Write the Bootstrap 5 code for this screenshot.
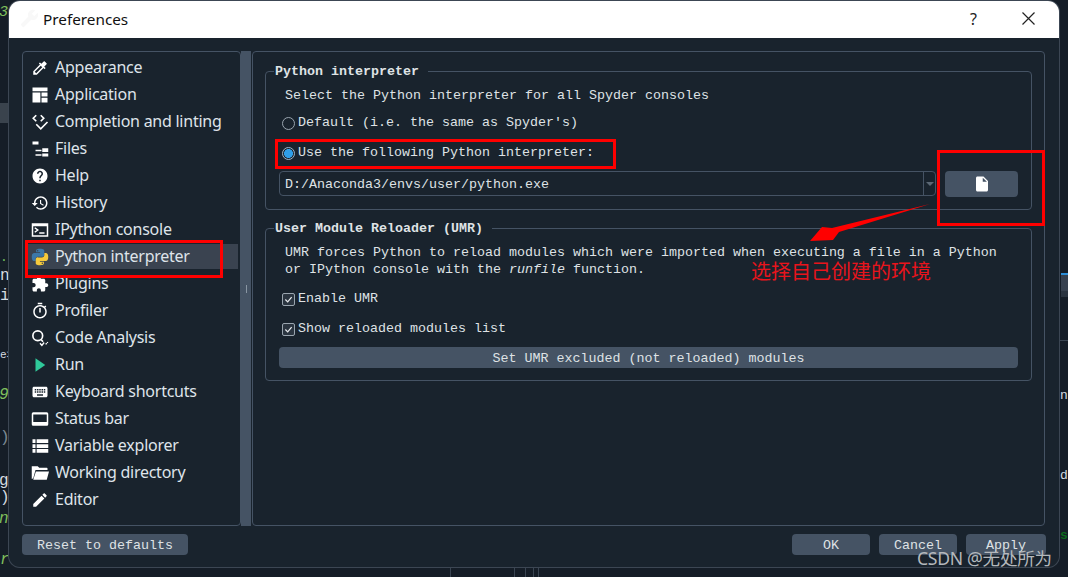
<!DOCTYPE html>
<html lang="en">
<head>
<meta charset="utf-8">
<title>Preferences</title>
<link href="https://cdn.jsdelivr.net/npm/bootstrap@5.3.0/dist/css/bootstrap.min.css" rel="stylesheet">
<style>
html,body{margin:0;width:1068px;height:577px;overflow:hidden;background:#141c25;}
.desk{position:relative;width:1068px;height:577px;overflow:hidden;background:#151d27;}
.frag{position:absolute;font:16px/20px "Liberation Mono",monospace;color:#d5dbe0;}
.gr{color:#7fbf5d;font-style:italic;}
.f1{left:-1px;top:3px;font-size:15px}.f2{left:0;top:266px}.f3{left:0;top:286px}.f4{left:0;top:345px;font-size:11px}
.f5{left:-1px;top:385px}.f6{left:0;top:428px;color:#7d8a94}.f7{left:-1px;top:471px}.f8{left:0;top:488px}
.f9{left:-1px;top:509px}.f10{left:0;top:550px}.f11{left:1060px;top:386px;font-size:13px}.f12{left:1060px;top:466px;font-size:13px}
.f13{left:1060px;top:526px;color:#0a6b1c;font-size:13px;font-weight:700}
.f14{left:0;top:248px;color:#6fbf5d;font-size:13px}
.rowbar{position:absolute;left:0;top:103px;width:8px;height:20px;background:#3a434d;}
.tabbar{position:absolute;left:1061px;top:273px;width:7px;height:18px;background:#37414f;border-top:2px solid #2d8fd8;}
.tabbar2{position:absolute;left:1061px;top:291px;width:7px;height:6px;background:#2a3440;}
.hline{position:absolute;left:1060px;top:340px;width:8px;height:1px;background:#3a4552;}
.vl{position:absolute;top:567px;width:1px;height:10px;background:#3a4552;}
.v1{left:450px}.v2{left:514px}.v3{left:525px}.v4{left:533px}.v5{left:538px}

.dlg{position:absolute;left:9px;top:1px;width:1050px;height:566px;background:#19232d;border-radius:11px;box-shadow:0 0 0 1px #3c4653;display:flex;flex-direction:column;overflow:hidden;}
.ttl{height:37px;background:#fff;color:#111;font:15.3px "Noto Sans",sans-serif;padding:0 24px 2px 11px;}
.ttl-help{font-size:16px;margin-right:45px;color:#222;}
.dlg-body{flex:1;padding:13px 13px 12px 13px;display:flex;flex-direction:column;}
.mainrow{height:475px;display:flex;margin-right:1px;}
.side{width:219px;flex:none;border:1px solid #455364;border-radius:4px;padding:2px 2px 0 5px;background:#19232d;}
.side .list-group-item{height:27px;padding:0 0 0 3px;background:transparent;border:0;color:#dfe4ea;font:16px/27px "Noto Sans",sans-serif;letter-spacing:-.25px;display:flex;align-items:center;gap:6px;border-radius:0;}
.side .list-group-item.sel{background:#3a4350;height:25px;margin:1px 0;}
.side svg{width:18px;height:18px;fill:#fff;flex:none;}
.split{width:10px;flex:none;background:#455364;display:flex;align-items:center;justify-content:center;margin-right:1px;}
.grip{width:1px;height:8px;background:#8996a3;}
.panel{flex:1;min-width:0;border:1px solid #455364;border-radius:4px;padding:19px 12px 0 12px;}
.grp{border:1px solid #455364;border-radius:4px;padding:0 13px 12px 13px;font:13.34px/18px "Liberation Mono",monospace;color:#dfe2e5;}
.grp+.grp{margin-top:18px;}
.gtitle{margin-top:-9px;height:18px;margin-left:-5px;font-weight:700;background:#19232d;display:table;padding:0 9px 0 1px;}
.g-desc{margin-top:6px;padding-left:6px;}
.g-desc2{margin-top:6px;padding-left:6px;line-height:17px;}
.opt{display:flex;align-items:center;height:18px;gap:3px;padding-left:3px;}
.o1{margin-top:9px}.o2{margin-top:12px}.o3{margin-top:12px}.o4{margin-top:12px}
.opt .form-check-input{width:13px;height:13px;margin:0;background-color:#19232d;border:1px solid #9aa5af;flex:none;}
.opt .form-check-input[type=radio]:checked{background-color:#19232d;border-color:#9fb6c8;background-image:radial-gradient(circle,#2f9fe8 0 4.2px,transparent 4.7px);}
.opt .form-check-input[type=checkbox]{border-radius:2px;background-color:#2b3540;}
.opt .form-check-input[type=checkbox]:checked{background-color:#2b3540;border-color:#9aa5af;background-image:url("data:image/svg+xml,%3csvg xmlns='http://www.w3.org/2000/svg' viewBox='0 0 14 14'%3e%3cpath fill='none' stroke='%23e6e9ec' stroke-width='1.6' d='M3 7l3 3 5-6'/%3e%3c/svg%3e");background-size:100%;}
.pathrow{margin-top:9px;display:flex;align-items:flex-start;gap:9px;}
.combo{width:657px;height:25px;border:1px solid #455364;border-radius:4px;display:flex;color:#dfe2e5;}
.combo-val{flex:1;padding-left:5px;line-height:25px;}
.combo-arr{width:12px;border-left:1px solid #455364;display:flex;align-items:center;justify-content:center;}
.tri{width:0;height:0;border:4px solid transparent;border-top:4px solid #5b6875;border-bottom:0;}
.spy{background:#455364;border:0;border-radius:4px;color:#dfe2e5;font:13.34px/21px "Liberation Mono",monospace;height:21px;padding:1px 0 0;}
.spy:hover{background:#455364;color:#dfe2e5;}
.pick{width:73px;height:26px;display:flex;align-items:center;justify-content:center;padding:0;}
.pick svg{width:18px;height:18px;fill:#fff;}
.wide{display:block;width:739px;margin-top:9px;}
.footrow{margin-top:8px;display:flex;align-items:center;}
.b-reset{width:166px;}
.b-ok{width:78px;margin-left:auto;}
.b-can{width:78px;margin-left:9px;}
.b-app{width:80px;margin-left:9px;}

.redbox{position:absolute;border:3px solid #ff0000;}
.r1{left:25px;top:240px;width:198px;height:38px;}
.r2{left:275px;top:139px;width:341px;height:30px;}
.r3{left:937px;top:150px;width:108px;height:76px;}
.arrow{position:absolute;left:800px;top:195px;width:140px;height:55px;}
.note{position:absolute;left:751px;top:258px;color:#e8141c;font:20px/26px "Noto Sans CJK SC",sans-serif;}
.wm{position:absolute;left:917px;top:546px;color:#b4b8bc;font:17.6px/24px "Noto Sans","Noto Sans CJK SC",sans-serif;letter-spacing:-.3px;white-space:nowrap;}
</style>
</head>
<body>
<div class="desk">
  <div class="rowbar"></div><div class="tabbar"></div><div class="tabbar2"></div><div class="hline"></div>
  <div class="vl v1"></div><div class="vl v2"></div><div class="vl v3"></div><div class="vl v4"></div><div class="vl v5"></div>
  <span class="frag gr f1">3</span><span class="frag f14">.</span><span class="frag f2">n</span><span class="frag f3">i</span><span class="frag f4">e&gt;</span><span class="frag gr f5">9</span><span class="frag f6">)</span><span class="frag f7">g</span><span class="frag f8">)</span><span class="frag gr f9">n</span><span class="frag gr f10">r</span><span class="frag f11">n</span><span class="frag f12">d</span><span class="frag f13">s</span>

  <div class="dlg">
    <div class="ttl d-flex align-items-center">
      <svg width="19" height="19" viewBox="0 0 24 24" class="me-1"><path fill="#f8f8f8" d="M22.700 19l-9.100-9.100c.9-2.300.4-5-1.500-6.900-2-2-5-2.400-7.400-1.300L9 6 6 9 1.600 4.700C.4 7.100.9 10.100 2.900 12.100c1.900 1.900 4.600 2.400 6.900 1.500l9.100 9.100c.4.400 1 .4 1.400 0l2.300-2.300c.5-.4.500-1.100.1-1.400z" transform="rotate(90 12 12)"/></svg>
      <span>Preferences</span>
      <span class="ms-auto ttl-help">?</span>
      <svg width="13" height="13" viewBox="0 0 13 13"><path d="M.5.500l12 12M12.500.500l-12 12" stroke="#222" stroke-width="1.200" fill="none"/></svg>
    </div>
    <div class="dlg-body">
      <div class="mainrow">
        <div class="side">
          <div class="list-group list-group-flush">
            <div class="list-group-item"><svg viewBox="0 0 24 24"><path d="M20.710 5.630l-2.340-2.340c-.39-.39-1.020-.39-1.410 0l-3.120 3.120-1.930-1.910-1.410 1.410 1.420 1.420L3 16.250V21h4.750l8.920-8.920 1.420 1.420 1.410-1.410-1.920-1.920 3.120-3.120c.4-.4.4-1.030.01-1.420zM6.920 19L5 17.080l8.060-8.060 1.920 1.920L6.920 19z"/></svg>Appearance</div>
            <div class="list-group-item"><svg viewBox="0 0 24 24"><path d="M2 2h20v5H2zM2 8.500h10.500V22H2zM14 8.500h8V14h-8zM14 15.500h8V22h-8z"/></svg>Application</div>
            <div class="list-group-item"><svg viewBox="0 0 24 24"><path d="M7 3L3 7l4 4M13 3l4 4-4 4M7 15l6 6 9-9" fill="none" stroke="#fff" stroke-width="2.200"/></svg>Completion and linting</div>
            <div class="list-group-item"><svg viewBox="0 0 24 24"><path d="M2 2h8v4H2zM4 7h2v14h8v-2H6v-4h8v-2H6V7H4zM15 11h8v5h-8zM15 18h8v4h-8z"/></svg>Files</div>
            <div class="list-group-item"><svg viewBox="0 0 24 24"><path d="M12 2C6.480 2 2 6.480 2 12s4.480 10 10 10 10-4.480 10-10S17.520 2 12 2zm1 17h-2v-2h2v2zm2.070-7.750l-.9.920C13.450 12.900 13 13.500 13 15h-2v-.5c0-1.100.45-2.100 1.170-2.830l1.240-1.260c.37-.36.59-.86.59-1.410 0-1.100-.9-2-2-2s-2 .9-2 2H8c0-2.210 1.790-4 4-4s4 1.790 4 4c0 .88-.36 1.680-.93 2.250z"/></svg>Help</div>
            <div class="list-group-item"><svg viewBox="0 0 24 24"><path d="M13 3c-4.970 0-9 4.030-9 9H1l3.890 3.890.07.14L9 12H6c0-3.870 3.130-7 7-7s7 3.130 7 7-3.130 7-7 7c-1.930 0-3.680-.79-4.940-2.060l-1.420 1.420C8.270 19.990 10.510 21 13 21c4.970 0 9-4.030 9-9s-4.030-9-9-9zm-1 5v5l4.280 2.540.72-1.210-3.500-2.080V8H12z"/></svg>History</div>
            <div class="list-group-item"><svg viewBox="0 0 24 24"><path fill-rule="evenodd" d="M1 3h22v18H1zM3 7v12h18V7z"/><path d="M5 9l4 3-4 3" fill="none" stroke="#fff" stroke-width="2"/><path d="M11 15h7v2h-7z"/></svg>IPython console</div>
            <div class="list-group-item sel"><svg viewBox="0 0 24 24"><path fill="#3b77a8" d="M11.900 1C6.500 1 6.800 3.300 6.800 3.300v2.500h5.300v.8H4.700S1 6.200 1 11.900s3.200 5.500 3.200 5.500h2v-2.700s-.1-3.200 3.100-3.200h5.400s3 .05 3-2.900V3.900S18.200 1 11.900 1zM8.900 2.700a1 1 0 1 1 0 2 1 1 0 0 1 0-2z"/><path fill="#f4c93c" d="M12.100 23c5.400 0 5.100-2.300 5.100-2.300v-2.500h-5.300v-.8h7.400s3.700.4 3.700-5.300-3.200-5.500-3.200-5.500h-2v2.700s.1 3.200-3.100 3.200H9.300s-3-.05-3 2.900v4.700S5.800 23 12.100 23zm3-1.700a1 1 0 1 1 0-2 1 1 0 0 1 0 2z"/></svg>Python interpreter</div>
            <div class="list-group-item"><svg viewBox="0 0 24 24"><path d="M20.500 11H19V7c0-1.100-.9-2-2-2h-4V3.500C13 2.120 11.880 1 10.500 1S8 2.120 8 3.500V5H4c-1.100 0-1.990.9-1.990 2v3.800H3.500c1.490 0 2.700 1.210 2.700 2.700s-1.210 2.700-2.700 2.700H2V20c0 1.100.9 2 2 2h3.800v-1.500c0-1.490 1.210-2.700 2.700-2.700 1.490 0 2.700 1.210 2.700 2.700V22H17c1.100 0 2-.9 2-2v-4h1.500c1.380 0 2.500-1.120 2.500-2.500S21.880 11 20.500 11z"/></svg>Plugins</div>
            <div class="list-group-item"><svg viewBox="0 0 24 24"><path d="M15 1H9v2h6V1zm-4 13h2V8h-2v6zm8.030-6.610l1.420-1.420c-.43-.51-.9-.99-1.410-1.410l-1.420 1.420C16.070 4.740 14.120 4 12 4c-4.970 0-9 4.030-9 9s4.020 9 9 9 9-4.030 9-9c0-2.120-.74-4.070-1.970-5.610zM12 20c-3.870 0-7-3.130-7-7s3.130-7 7-7 7 3.130 7 7-3.130 7-7 7z"/></svg>Profiler</div>
            <div class="list-group-item"><svg viewBox="0 0 24 24"><circle cx="9" cy="9" r="6.500" fill="none" stroke="#fff" stroke-width="2.200"/><path d="M13.500 14l2.500 3" stroke="#fff" stroke-width="2.200" fill="none"/><path d="M12 19l2.500 3 3-4M19.500 20.500l1.500-1.500M21.500 18.500l1-1" fill="none" stroke="#fff" stroke-width="1.800"/></svg>Code Analysis</div>
            <div class="list-group-item"><svg viewBox="0 0 24 24"><path fill="#2fc99a" d="M6 3l13 9-13 9z"/></svg>Run</div>
            <div class="list-group-item"><svg viewBox="0 0 24 24"><path d="M20 5H4c-1.100 0-1.990.9-1.990 2L2 17c0 1.100.9 2 2 2h16c1.100 0 2-.9 2-2V7c0-1.100-.9-2-2-2zm-9 3h2v2h-2V8zm0 3h2v2h-2v-2zM8 8h2v2H8V8zm0 3h2v2H8v-2zm-1 2H5v-2h2v2zm0-3H5V8h2v2zm9 7H8v-2h8v2zm0-4h-2v-2h2v2zm0-3h-2V8h2v2zm3 3h-2v-2h2v2zm0-3h-2V8h2v2z"/></svg>Keyboard shortcuts</div>
            <div class="list-group-item"><svg viewBox="0 0 24 24"><path fill-rule="evenodd" d="M3 3h18a2 2 0 0 1 2 2v14a2 2 0 0 1-2 2H3a2 2 0 0 1-2-2V5a2 2 0 0 1 2-2zm0 3v10h18V6z"/></svg>Status bar</div>
            <div class="list-group-item"><svg viewBox="0 0 24 24"><path d="M2 3h4v5H2zM7.500 3H23v5H7.500zM2 9.500h4v5H2zM7.500 9.500H23v5H7.500zM2 16h4v5H2zM7.500 16H23v5H7.500z"/></svg>Variable explorer</div>
            <div class="list-group-item"><svg viewBox="0 0 24 24"><path d="M1 3h8l2 2h10a1 1 0 0 1 1 1v2H6L3 19 1 20V3zM6.500 10H24l-3 11H3z"/></svg>Working directory</div>
            <div class="list-group-item"><svg viewBox="0 0 24 24"><path d="M3 17.250V21h3.750L17.810 9.940l-3.750-3.750L3 17.250zM20.710 7.040c.39-.39.39-1.020 0-1.410l-2.340-2.340c-.39-.39-1.020-.39-1.410 0l-1.830 1.830 3.750 3.750 1.830-1.830z"/></svg>Editor</div>
          </div>
        </div>
        <div class="split"><div class="grip"></div></div>
        <div class="panel">
          <div class="grp">
            <div class="gtitle">Python interpreter</div>
            <div class="g-desc">Select the Python interpreter for all Spyder consoles</div>
            <label class="opt o1"><input class="form-check-input" type="radio" name="py">Default (i.e. the same as Spyder's)</label>
            <label class="opt o2"><input class="form-check-input" type="radio" name="py" checked>Use the following Python interpreter:</label>
            <div class="pathrow">
              <div class="combo"><div class="combo-val">D:/Anaconda3/envs/user/python.exe</div><div class="combo-arr"><div class="tri"></div></div></div>
              <button class="btn spy pick" type="button" aria-label="Select file"><svg viewBox="0 0 24 24"><path d="M6 2c-1.100 0-2 .9-2 2v16c0 1.100.9 2 2 2h12c1.100 0 2-.9 2-2V8l-6-6H6zm7 7V3.500L18.500 9H13z"/></svg></button>
            </div>
          </div>
          <div class="grp">
            <div class="gtitle">User Module Reloader (UMR)</div>
            <div class="g-desc2">UMR forces Python to reload modules which were imported when executing a file in a Python<br>or IPython console with the <i>runfile</i> function.</div>
            <label class="opt o3"><input class="form-check-input" type="checkbox" checked>Enable UMR</label>
            <label class="opt o4"><input class="form-check-input" type="checkbox" checked>Show reloaded modules list</label>
            <button class="btn spy wide" type="button">Set UMR excluded (not reloaded) modules</button>
          </div>
        </div>
      </div>
      <div class="footrow">
        <button class="btn spy b-reset" type="button">Reset to defaults</button>
        <button class="btn spy b-ok" type="button">OK</button>
        <button class="btn spy b-can" type="button">Cancel</button>
        <button class="btn spy b-app" type="button">Apply</button>
      </div>
    </div>
  </div>

  <div class="redbox r1"></div><div class="redbox r2"></div><div class="redbox r3"></div>
  <svg class="arrow" viewBox="0 0 140 55"><polygon fill="#ff0000" points="130,9 39,37 33,45 10,46 22,32 32,33"/></svg>
  <div class="note">选择自己创建的环境</div>
  <div class="wm">CSDN @无处所为</div>
</div>
<script src="https://cdn.jsdelivr.net/npm/bootstrap@5.3.0/dist/js/bootstrap.bundle.min.js"></script>
</body>
</html>
